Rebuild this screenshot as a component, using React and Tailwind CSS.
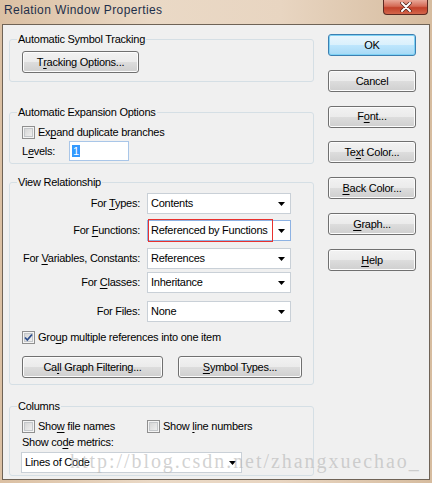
import React from 'react';

const U = ({ c }) => <span className="underline underline-offset-[2px] decoration-1">{c}</span>;

const Btn = ({ children, className = '', isDefault }) => (
  <div
    className={`h-[22px] flex items-center justify-center rounded-[3px] border ${
      isDefault
        ? 'border-[#3c7fb1] bg-[linear-gradient(to_bottom,#eaf6fd_0%,#d9f0fc_50%,#bee6fd_50%,#a7d9f5_100%)] shadow-[inset_0_0_0_1px_#7fd2f5]'
        : 'border-[#707070] bg-[linear-gradient(to_bottom,#f2f2f2_0%,#ebebeb_50%,#dddddd_50%,#cfcfcf_100%)] shadow-[inset_0_0_0_1px_#fcfcfc]'
    } ${className}`}
  >
    {children}
  </div>
);

const Check = ({ checked }) => (
  <div className="w-[13px] h-[13px] shrink-0 border border-[#8f8f8f] bg-[linear-gradient(135deg,#cfcfcf_0%,#f6f6f6_100%)] shadow-[inset_0_0_0_1px_#f4f4f4,inset_0_0_0_2px_#c4c7ca] flex items-center justify-center">
    {checked && (
      <svg width="11" height="11" viewBox="0 0 11 11">
        <path d="M2 5.5 L4.3 8 L9 2.5" fill="none" stroke="#2c4d8c" strokeWidth="1.8" />
      </svg>
    )}
  </div>
);

const Arrow = () => (
  <div className="w-[17px] h-full flex items-center justify-center shrink-0">
    <svg width="7" height="4" viewBox="0 0 7 4">
      <path d="M0 0 H7 L3.5 4 Z" fill="#000" />
    </svg>
  </div>
);

const Combo = ({ value, w = 'w-[144px]', focused, marked }) => (
  <div className={`${w} h-[21px] flex items-stretch bg-white border ${focused ? 'border-[#8db2e3]' : 'border-[#c9d0d7]'}`}>
    {marked ? (
      <div className="flex-1 flex items-center pl-[2px] border border-[#e8312f] -my-[2px]">{value}</div>
    ) : (
      <div className="flex-1 flex items-center pl-[3px]">{value}</div>
    )}
    <Arrow />
  </div>
);

const Group = ({ label, children, className = '' }) => (
  <fieldset className={`border border-[#d5dfe5] rounded-[3px] ${className}`}>
    <legend className="ml-[7px] px-[1px] leading-[13px]">{label}</legend>
    {children}
  </fieldset>
);

const Row = ({ label, children, className = '' }) => (
  <div className={`flex items-center ${className}`}>
    <div className="w-[118px] text-right pr-0">{label}</div>
    <div className="ml-[7px]">{children}</div>
  </div>
);

export default function App() {
  return (
    <div className="relative w-[432px] h-[483px] overflow-hidden flex flex-col bg-[linear-gradient(90deg,#dbc0a3_0%,#ead9c6_35%,#e8d5c1_65%,#d6bc9f_100%)] font-['Liberation_Sans',Arial,sans-serif] text-[11px] tracking-[-0.25px] text-black">
      <div className="h-[24px] flex items-start">
        <div className="pl-[4px] pt-[3px] text-[12px] tracking-[0.4px] leading-[15px] text-[#1e2f4a]">Relation Window Properties</div>
        <div className="ml-auto mr-[4px] w-[45px] h-[15px] rounded-b-[4px] border border-t-0 border-[#5c2a22] bg-[linear-gradient(to_bottom,#e9a898_0%,#d46a55_45%,#c2412a_55%,#d3664b_100%)] flex items-center justify-center">
          <svg width="12" height="10" viewBox="0 0 12 10">
            <path d="M2 1 L10 9 M10 1 L2 9" stroke="#4a2018" strokeWidth="3.4" strokeLinecap="round" />
            <path d="M2 1 L10 9 M10 1 L2 9" stroke="#ffffff" strokeWidth="2" strokeLinecap="round" />
          </svg>
        </div>
      </div>

      <div className="mx-[2px] h-[456px] border border-[#6f6356] bg-[#f0f0f0] flex">
        <div className="ml-[6px] pt-[8px] w-[305px] flex flex-col">
          <Group label="Automatic Symbol Tracking" className="pb-[8px]">
            <div className="pl-[12px] pt-[5px]">
              <Btn className="w-[117px]">T<U c="r" />acking Options...</Btn>
            </div>
          </Group>

          <Group label="Automatic Expansion Options" className="mt-[24px] pb-[2px]">
            <div className="pl-[12px]">
              <div className="mt-[7px] h-[13px] flex items-center gap-[3px]">
                <Check />
                <span>Ex<U c="p" />and duplicate branches</span>
              </div>
              <div className="mt-[2px] h-[20px] flex items-center">
                <div className="w-[47px]">L<U c="e" />vels:</div>
                <div className="w-[60px] h-[20px] bg-white border border-[#a9c6e8] flex items-center pl-[2px]">
                  <span className="bg-[#3399ff] text-white leading-[12px] px-[1px]">1</span>
                </div>
              </div>
            </div>
          </Group>

          <Group label="View Relationship" className="mt-[12px] pb-[6px]">
            <div className="pl-[12px]">
              <Row label={<>For <U c="T" />ypes:</>} className="mt-[4px]"><Combo value="Contents" /></Row>
              <Row label={<>For <U c="F" />unctions:</>} className="mt-[6px]"><Combo value="Referenced by Functions" focused marked /></Row>
              <Row label={<>For <U c="V" />ariables, Constants:</>} className="mt-[7px]"><Combo value="References" /></Row>
              <Row label={<>For <U c="C" />lasses:</>} className="mt-[3px]"><Combo value="Inheritance" /></Row>
              <Row label="For Files:" className="mt-[8px]"><Combo value="None" /></Row>
              <div className="mt-[9px] h-[13px] flex items-center gap-[3px]">
                <Check checked />
                <span>Gro<U c="u" />p multiple references into one item</span>
              </div>
              <div className="mt-[12px] flex gap-[15px]">
                <Btn className="w-[141px]">Ca<U c="l" />l Graph Filtering...</Btn>
                <Btn className="w-[124px]"><U c="S" />ymbol Types...</Btn>
              </div>
            </div>
          </Group>

          <Group label="Columns" className="mt-[15px] pb-[2px]">
            <div className="pl-[12px]">
              <div className="mt-[7px] h-[13px] flex items-center">
                <div className="w-[125px] flex items-center gap-[3px]">
                  <Check />
                  <span>Sho<U c="w" /> file names</span>
                </div>
                <div className="flex items-center gap-[3px]">
                  <Check />
                  <span>Show <U c="l" />ine numbers</span>
                </div>
              </div>
              <div className="mt-[3px] h-[13px] leading-[13px]">Show co<U c="d" />e metrics:</div>
              <div className="mt-[3px] -ml-[1px]">
                <Combo value="Lines of Code" w="w-[221px]" />
              </div>
            </div>
          </Group>
        </div>

        <div className="ml-[14px] pt-[9px] w-[88px] flex flex-col gap-[13.8px]">
          <Btn isDefault>OK</Btn>
          <Btn>Cancel</Btn>
          <Btn>F<U c="o" />nt...</Btn>
          <Btn>Te<U c="x" />t Color...</Btn>
          <Btn><U c="B" />ack Color...</Btn>
          <Btn><U c="G" />raph...</Btn>
          <Btn><U c="H" />elp</Btn>
        </div>
      </div>

      <div className="absolute left-[70px] top-[451px] leading-none text-[20px] tracking-[1.95px] font-['Liberation_Serif',serif] text-[#b4b4b4]/60 pointer-events-none whitespace-nowrap">
        http://blog.csdn.net/zhangxuechao_
      </div>
    </div>
  );
}
